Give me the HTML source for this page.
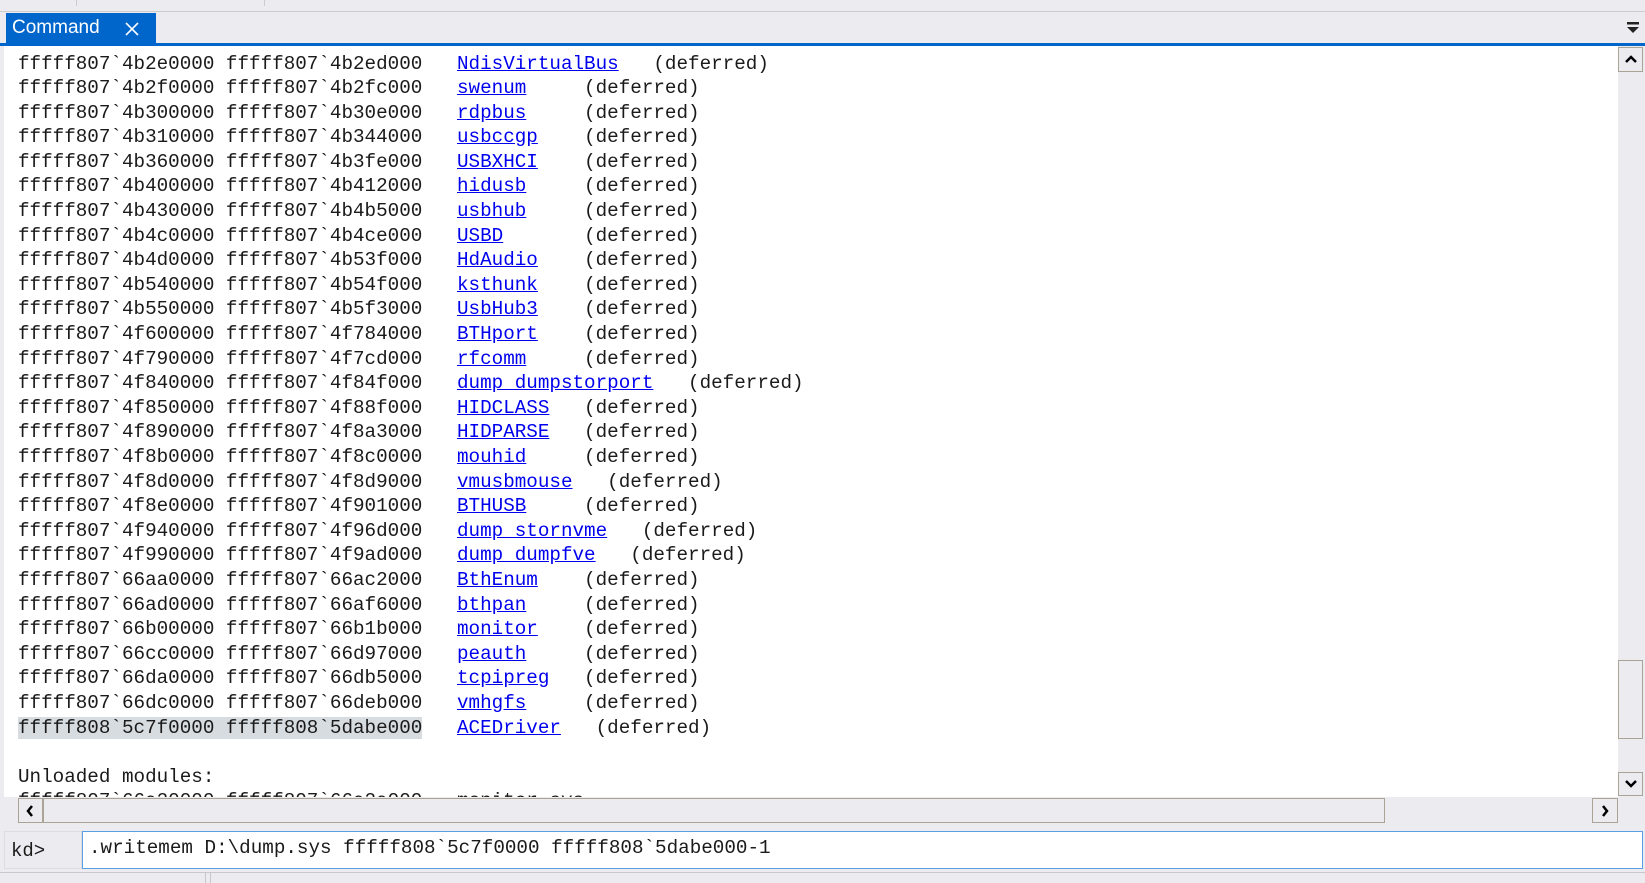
<!DOCTYPE html>
<html><head><meta charset="utf-8"><style>
*{margin:0;padding:0;box-sizing:border-box}
body{width:1645px;height:883px;overflow:hidden;background:#ecebf0;position:relative;font-family:"Liberation Mono",monospace}
.a{position:absolute}
#content{left:0;top:46px;width:1618px;height:751px;background:#fff;overflow:hidden;border-left:4px solid #ecebf0}
pre{position:absolute;left:14px;top:5.5px;font-family:"Liberation Mono",monospace;font-size:19.25px;line-height:24.6px;color:#1a1a1a;white-space:pre}
pre a{color:#0000ee;text-decoration:underline}
.hl{background:#d7dce1}
.btn{position:absolute;background:#ecebf0;border:1px solid #a9a496}
svg{position:absolute}
</style></head><body>
<div class="a" style="left:0;top:0;width:1645px;height:12px;border-bottom:1px solid #ccc"></div>
<div class="a" style="left:76px;top:0;width:1px;height:6px;background:#ccc"></div>
<div class="a" style="left:264px;top:0;width:1px;height:6px;background:#ccc"></div>
<div class="a" style="left:6px;top:13px;width:150px;height:31px;background:#0066cc;color:#fff;font-family:'Liberation Sans',sans-serif;font-size:19px;padding:4px 0 0 6px">Command</div>
<svg style="left:124px;top:21px" width="16" height="16"><path d="M2 2L14 14M14 2L2 14" stroke="#fff" stroke-width="1.6"/></svg>
<svg style="left:1626px;top:20px" width="14" height="14"><rect x="1" y="2" width="12" height="2.5" fill="#222"/><path d="M1 7H13L7 13Z" fill="#222"/></svg>
<div class="a" style="left:0;top:43px;width:1645px;height:3px;background:#0066cc"></div>
<div class="a" id="content"><pre>fffff807`4b2e0000 fffff807`4b2ed000   <a>NdisVirtualBus</a>   (deferred)
fffff807`4b2f0000 fffff807`4b2fc000   <a>swenum</a>     (deferred)
fffff807`4b300000 fffff807`4b30e000   <a>rdpbus</a>     (deferred)
fffff807`4b310000 fffff807`4b344000   <a>usbccgp</a>    (deferred)
fffff807`4b360000 fffff807`4b3fe000   <a>USBXHCI</a>    (deferred)
fffff807`4b400000 fffff807`4b412000   <a>hidusb</a>     (deferred)
fffff807`4b430000 fffff807`4b4b5000   <a>usbhub</a>     (deferred)
fffff807`4b4c0000 fffff807`4b4ce000   <a>USBD</a>       (deferred)
fffff807`4b4d0000 fffff807`4b53f000   <a>HdAudio</a>    (deferred)
fffff807`4b540000 fffff807`4b54f000   <a>ksthunk</a>    (deferred)
fffff807`4b550000 fffff807`4b5f3000   <a>UsbHub3</a>    (deferred)
fffff807`4f600000 fffff807`4f784000   <a>BTHport</a>    (deferred)
fffff807`4f790000 fffff807`4f7cd000   <a>rfcomm</a>     (deferred)
fffff807`4f840000 fffff807`4f84f000   <a>dump_dumpstorport</a>   (deferred)
fffff807`4f850000 fffff807`4f88f000   <a>HIDCLASS</a>   (deferred)
fffff807`4f890000 fffff807`4f8a3000   <a>HIDPARSE</a>   (deferred)
fffff807`4f8b0000 fffff807`4f8c0000   <a>mouhid</a>     (deferred)
fffff807`4f8d0000 fffff807`4f8d9000   <a>vmusbmouse</a>   (deferred)
fffff807`4f8e0000 fffff807`4f901000   <a>BTHUSB</a>     (deferred)
fffff807`4f940000 fffff807`4f96d000   <a>dump_stornvme</a>   (deferred)
fffff807`4f990000 fffff807`4f9ad000   <a>dump_dumpfve</a>   (deferred)
fffff807`66aa0000 fffff807`66ac2000   <a>BthEnum</a>    (deferred)
fffff807`66ad0000 fffff807`66af6000   <a>bthpan</a>     (deferred)
fffff807`66b00000 fffff807`66b1b000   <a>monitor</a>    (deferred)
fffff807`66cc0000 fffff807`66d97000   <a>peauth</a>     (deferred)
fffff807`66da0000 fffff807`66db5000   <a>tcpipreg</a>   (deferred)
fffff807`66dc0000 fffff807`66deb000   <a>vmhgfs</a>     (deferred)
<span class="hl">fffff808`5c7f0000 fffff808`5dabe000</span>   <a>ACEDriver</a>   (deferred)

Unloaded modules:
fffff807`66a20000 fffff807`66a2a000   monitor.sys</pre></div>
<div class="a" style="left:1618px;top:46px;width:27px;height:751px;background:#ecebf0"></div>
<div class="btn" style="left:1618px;top:47px;width:25px;height:25px"></div>
<svg style="left:1623px;top:53px" width="16" height="12"><path d="M3 9L8 4L13 9" stroke="#000" stroke-width="2.5" fill="none"/></svg>
<div class="btn" style="left:1618px;top:660px;width:25px;height:79px"></div>
<div class="btn" style="left:1618px;top:772px;width:25px;height:24px"></div>
<svg style="left:1623px;top:778px" width="16" height="12"><path d="M3 3L8 8L13 3" stroke="#000" stroke-width="2.5" fill="none"/></svg>
<div class="a" style="left:4px;top:797px;width:1614px;height:26px;background:#ecebf0"></div>
<div class="btn" style="left:18px;top:798px;width:25px;height:25px"></div>
<svg style="left:23px;top:803px" width="14" height="16"><path d="M9 3L5 8L9 13" stroke="#000" stroke-width="2.5" fill="none"/></svg>
<div class="btn" style="left:43px;top:798px;width:1342px;height:25px"></div>
<div class="btn" style="left:1592px;top:798px;width:26px;height:25px"></div>
<svg style="left:1598px;top:803px" width="14" height="16"><path d="M5 3L9 8L5 13" stroke="#000" stroke-width="2.5" fill="none"/></svg>
<div class="a" style="left:4px;top:831px;width:78px;height:38px;background:#ecebf0;border:1px solid #ddd;font-size:19px;color:#1a1a1a;padding:8px 0 0 6px;font-family:'Liberation Mono',monospace">kd&gt;</div>
<div class="a" style="left:82px;top:831px;width:1561px;height:38px;background:#fff;border:1.5px solid #5a9ee6;font-size:19.25px;color:#1a1a1a;padding:5px 0 0 6px;white-space:pre">.writemem D:\dump.sys fffff808`5c7f0000 fffff808`5dabe000-1</div>
<div class="a" style="left:0;top:872px;width:1645px;height:11px;border-top:1px solid #c8c8c8"></div>
<div class="a" style="left:205px;top:872px;width:1px;height:11px;background:#c8c8c8"></div>
<div class="a" style="left:210px;top:872px;width:1px;height:11px;background:#c8c8c8"></div>
</body></html>
